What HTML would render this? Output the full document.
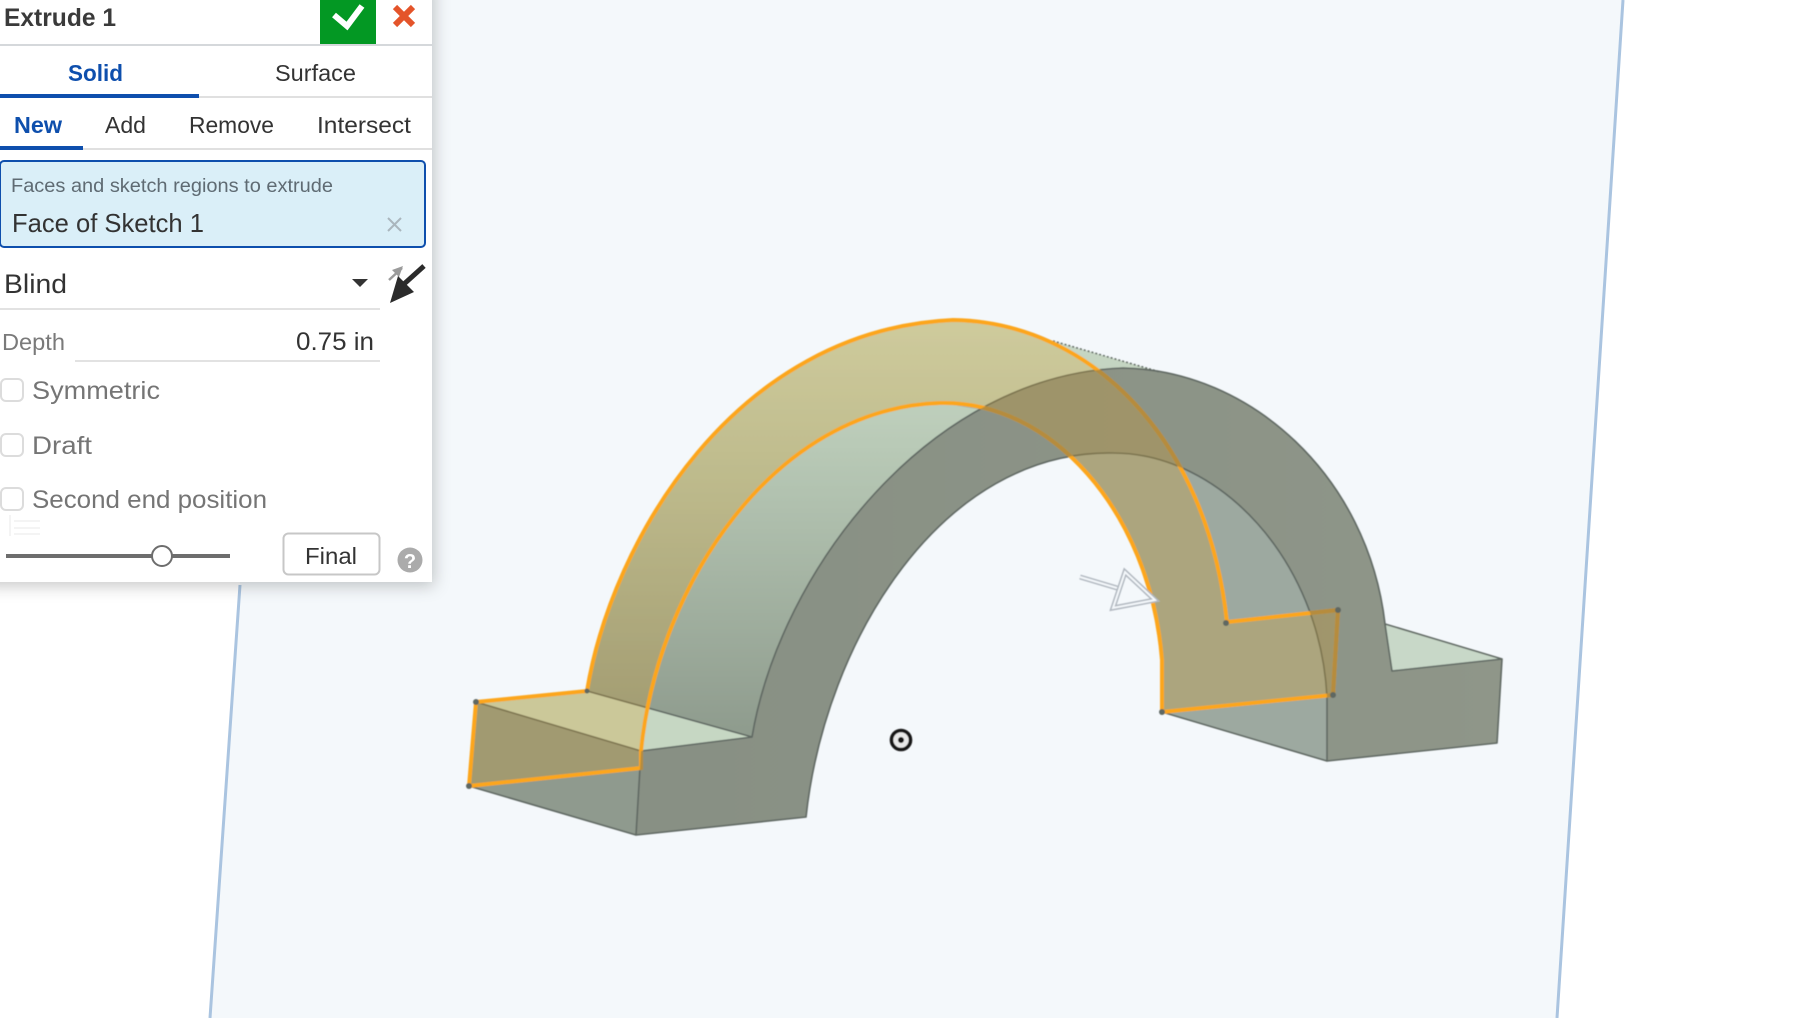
<!DOCTYPE html>
<html><head><meta charset="utf-8"><title>Extrude 1</title>
<style>
html,body{margin:0;padding:0;background:#fff;width:1802px;height:1018px;overflow:hidden}
svg{display:block}
text{font-family:"Liberation Sans",sans-serif}
</style></head><body>
<svg width="1802" height="1018" viewBox="0 0 1802 1018" xmlns="http://www.w3.org/2000/svg">
<defs>
<linearGradient id="g1" x1="0" y1="330" x2="0" y2="730" gradientUnits="userSpaceOnUse"><stop offset="0" stop-color="#c9d9c6"/><stop offset=".3" stop-color="#b8c9b6"/><stop offset="1" stop-color="#8f9c8e"/></linearGradient>
<linearGradient id="g2" x1="640" y1="0" x2="1500" y2="0" gradientUnits="userSpaceOnUse"><stop offset="0" stop-color="#889084"/><stop offset="1" stop-color="#8f9689"/></linearGradient>
<filter id="sh" x="-10%" y="-10%" width="125%" height="125%"><feDropShadow dx="2" dy="4" stdDeviation="8" flood-color="#000" flood-opacity=".22"/></filter>
<filter id="b" x="-5%" y="-5%" width="110%" height="110%"><feGaussianBlur stdDeviation=".5"/></filter>
<path id="front" d="M641 751 L752 737 C780 570 930 375 1123 368 C1250 370 1368 476 1385 624 L1392 671 L1502 659 L1497 743 L1327 761 L1327 697 C1320 560 1220 453 1113 453 C942 450 825 640 806 817 L636 835 Z"/>
<path id="sk" d="M476 702 L587 691 C612 540 735 330 953 320 C1090 322 1207 438 1227 622 L1338 610 L1333 695 L1162 712 L1162 660 C1150 510 1050 400 940 403 C775 408 658 583 641 751 L641 768 L469 786 Z"/>
<clipPath id="fc"><use href="#front"/></clipPath>
</defs>
<rect width="1802" height="1018" fill="#fff"/>
<polygon points="280,0 1623,0 1557,1018 210,1018" fill="#f4f8fb"/>
<path d="M240 585 L210 1018 M1623 0 L1557 1018" stroke="#aac4e0" stroke-width="3" fill="none"/>

<g filter="url(#b)">
<!-- light outer surface -->
<path d="M587 691 C612 540 735 330 953 320 C1000 320 1030 330 1053 341 L1160 372 L1100 385 L950 440 L850 540 L790 640 L752 737 Z" fill="url(#g1)"/>
<path d="M476 702 L587 691 L752 737 L641 751 Z" fill="#c6d7c3"/>
<path d="M469 786 L636 835 L641 751 L476 702 Z" fill="#8f9a8e"/>
<!-- inner surface on right -->
<path d="M940 403 C1050 400 1150 510 1162 660 L1162 712 L1327 761 L1340 700 L1330 520 L1110 430 Z" fill="#9da9a0"/>
<path d="M1385 624 L1502 659 L1392 671 Z" fill="#c8d8c8"/>
<use href="#front" fill="url(#g2)"/>
<!-- edges -->
<g fill="none" stroke="#5f6862" stroke-width="1.6" stroke-linejoin="round">
<use href="#front"/>
<path d="M476 702 L641 751 M636 835 L469 786 L476 702 M587 691 L752 737 M1385 624 L1502 659 M1327 761 L1162 712"/>
<path d="M1053 341 L1160 372" stroke-dasharray="2 2"/>
</g>
<!-- sketch overlay -->
<use href="#sk" fill="#dd9a16" fill-opacity=".24"/>
<use href="#sk" fill="none" stroke="#fca61f" stroke-width="4" stroke-linejoin="round"/>
<g clip-path="url(#fc)"><use href="#sk" fill="none" stroke="#b68c3c" stroke-width="4.200"/></g>
<g fill="#5f6862"><circle cx="476" cy="702" r="3"/><circle cx="469" cy="786" r="3"/><circle cx="1162" cy="712" r="3"/><circle cx="1226" cy="623" r="3"/><circle cx="1338" cy="610" r="3"/><circle cx="1333" cy="695" r="3"/><circle cx="587" cy="691" r="2.500"/></g>
<!-- arrow -->
<path d="M1080 577 L1117 588 M1125 572 L1155 600 L1113 608 Z" fill="none" stroke="#b0b7bf" stroke-width="5"/>
<path d="M1080 577 L1117 588 M1125 572 L1155 600 L1113 608 Z" fill="none" stroke="#f4f8fb" stroke-width="2"/>
<!-- origin -->
<circle cx="901" cy="740" r="9.500" fill="#e8e8e8" stroke="#161616" stroke-width="3.600"/><circle cx="901" cy="740" r="3" fill="#161616"/>
</g>

<!-- panel -->
<rect x="-20" y="-20" width="452" height="602" fill="#fff" filter="url(#sh)"/>
<g style="filter:blur(.25px)">
<text x="4" y="26" font-size="25" font-weight="700" fill="#3a3a3a" textLength="112" lengthAdjust="spacingAndGlyphs">Extrude 1</text>
<rect x="320" y="0" width="56" height="44" fill="#039823"/>
<path d="M334 15 L347 26 L362 6" fill="none" stroke="#fff" stroke-width="6"/>
<path d="M395 7 L413 25 M413 7 L395 25" fill="none" stroke="#e4542a" stroke-width="6"/>
<rect x="0" y="44" width="432" height="2" fill="#d5d8db"/>
<text x="68" y="81" font-size="23" font-weight="700" fill="#0e4fad" textLength="55" lengthAdjust="spacingAndGlyphs">Solid</text>
<text x="275" y="81" font-size="23" fill="#333" textLength="81" lengthAdjust="spacingAndGlyphs">Surface</text>
<rect x="0" y="96" width="432" height="2" fill="#e0e0e0"/>
<rect x="0" y="94" width="199" height="4" fill="#0e4fad"/>
<text x="14" y="133" font-size="23" font-weight="700" fill="#0e4fad" textLength="48" lengthAdjust="spacingAndGlyphs">New</text>
<text x="105" y="133" font-size="23" fill="#333" textLength="41" lengthAdjust="spacingAndGlyphs">Add</text>
<text x="189" y="133" font-size="23" fill="#333" textLength="85" lengthAdjust="spacingAndGlyphs">Remove</text>
<text x="317" y="133" font-size="23" fill="#333" textLength="94" lengthAdjust="spacingAndGlyphs">Intersect</text>
<rect x="0" y="148" width="432" height="2" fill="#e0e0e0"/>
<rect x="0" y="146" width="83" height="4" fill="#0e4fad"/>
<rect x="0" y="161" width="425" height="86" rx="4" fill="#daeff8" stroke="#0e4fad" stroke-width="2"/>
<text x="11" y="192" font-size="19" fill="#5f6b73" textLength="322" lengthAdjust="spacingAndGlyphs">Faces and sketch regions to extrude</text>
<text x="12" y="232" font-size="26" fill="#333" textLength="192" lengthAdjust="spacingAndGlyphs">Face of Sketch 1</text>
<path d="M388 218 L401 231 M401 218 L388 231" stroke="#aab6bd" stroke-width="2" fill="none"/>
<text x="4" y="293" font-size="27" fill="#333" textLength="63" lengthAdjust="spacingAndGlyphs">Blind</text>
<path d="M352 279 L368 279 L360 287 Z" fill="#333"/>
<path d="M402 268 L389 280" stroke="#9b9b9b" stroke-width="2.500" fill="none"/><path d="M403 266 L392 270 L399 277 Z" fill="#9b9b9b"/>
<path d="M424 266 L404 284" stroke="#2b2b2b" stroke-width="5" fill="none"/><path d="M390 303 L398 276 L414 292 Z" fill="#2b2b2b"/>
<rect x="0" y="308" width="380" height="2" fill="#e2e2e2"/>
<text x="2" y="350" font-size="23" fill="#7a7a7a" textLength="63" lengthAdjust="spacingAndGlyphs">Depth</text>
<text x="296" y="350" font-size="25" fill="#333" textLength="78" lengthAdjust="spacingAndGlyphs">0.75 in</text>
<rect x="75" y="360" width="305" height="2" fill="#e2e2e2"/>
<g fill="#fff" stroke="#dcdcdc" stroke-width="2">
<rect x="1" y="379" width="22" height="22" rx="5"/><rect x="1" y="434" width="22" height="22" rx="5"/><rect x="1" y="488" width="22" height="22" rx="5"/></g>
<g font-size="25" fill="#757575">
<text x="32" y="399" textLength="128" lengthAdjust="spacingAndGlyphs">Symmetric</text>
<text x="32" y="454" textLength="60" lengthAdjust="spacingAndGlyphs">Draft</text>
<text x="32" y="508" textLength="235" lengthAdjust="spacingAndGlyphs">Second end position</text></g>
<path d="M10 515 V536 M14 521 H40 M14 528 H40 M14 534 H40" stroke="#f0f0f0" stroke-width="1.500" fill="none"/>
<rect x="6" y="554" width="224" height="4" fill="#6d6d6d"/>
<circle cx="162" cy="556" r="10" fill="#fff" stroke="#6d6d6d" stroke-width="2"/>
<rect x="283.500" y="533.500" width="96" height="41" rx="5" fill="#fff" stroke="#c7c7c7" stroke-width="2"/>
<text x="305" y="564" font-size="23" fill="#333" textLength="52" lengthAdjust="spacingAndGlyphs">Final</text>
<circle cx="410" cy="560" r="12.500" fill="#ababab"/>
<text x="410" y="568" font-size="20" font-weight="700" fill="#fff" text-anchor="middle">?</text>
</g>
</svg>
</body></html>
